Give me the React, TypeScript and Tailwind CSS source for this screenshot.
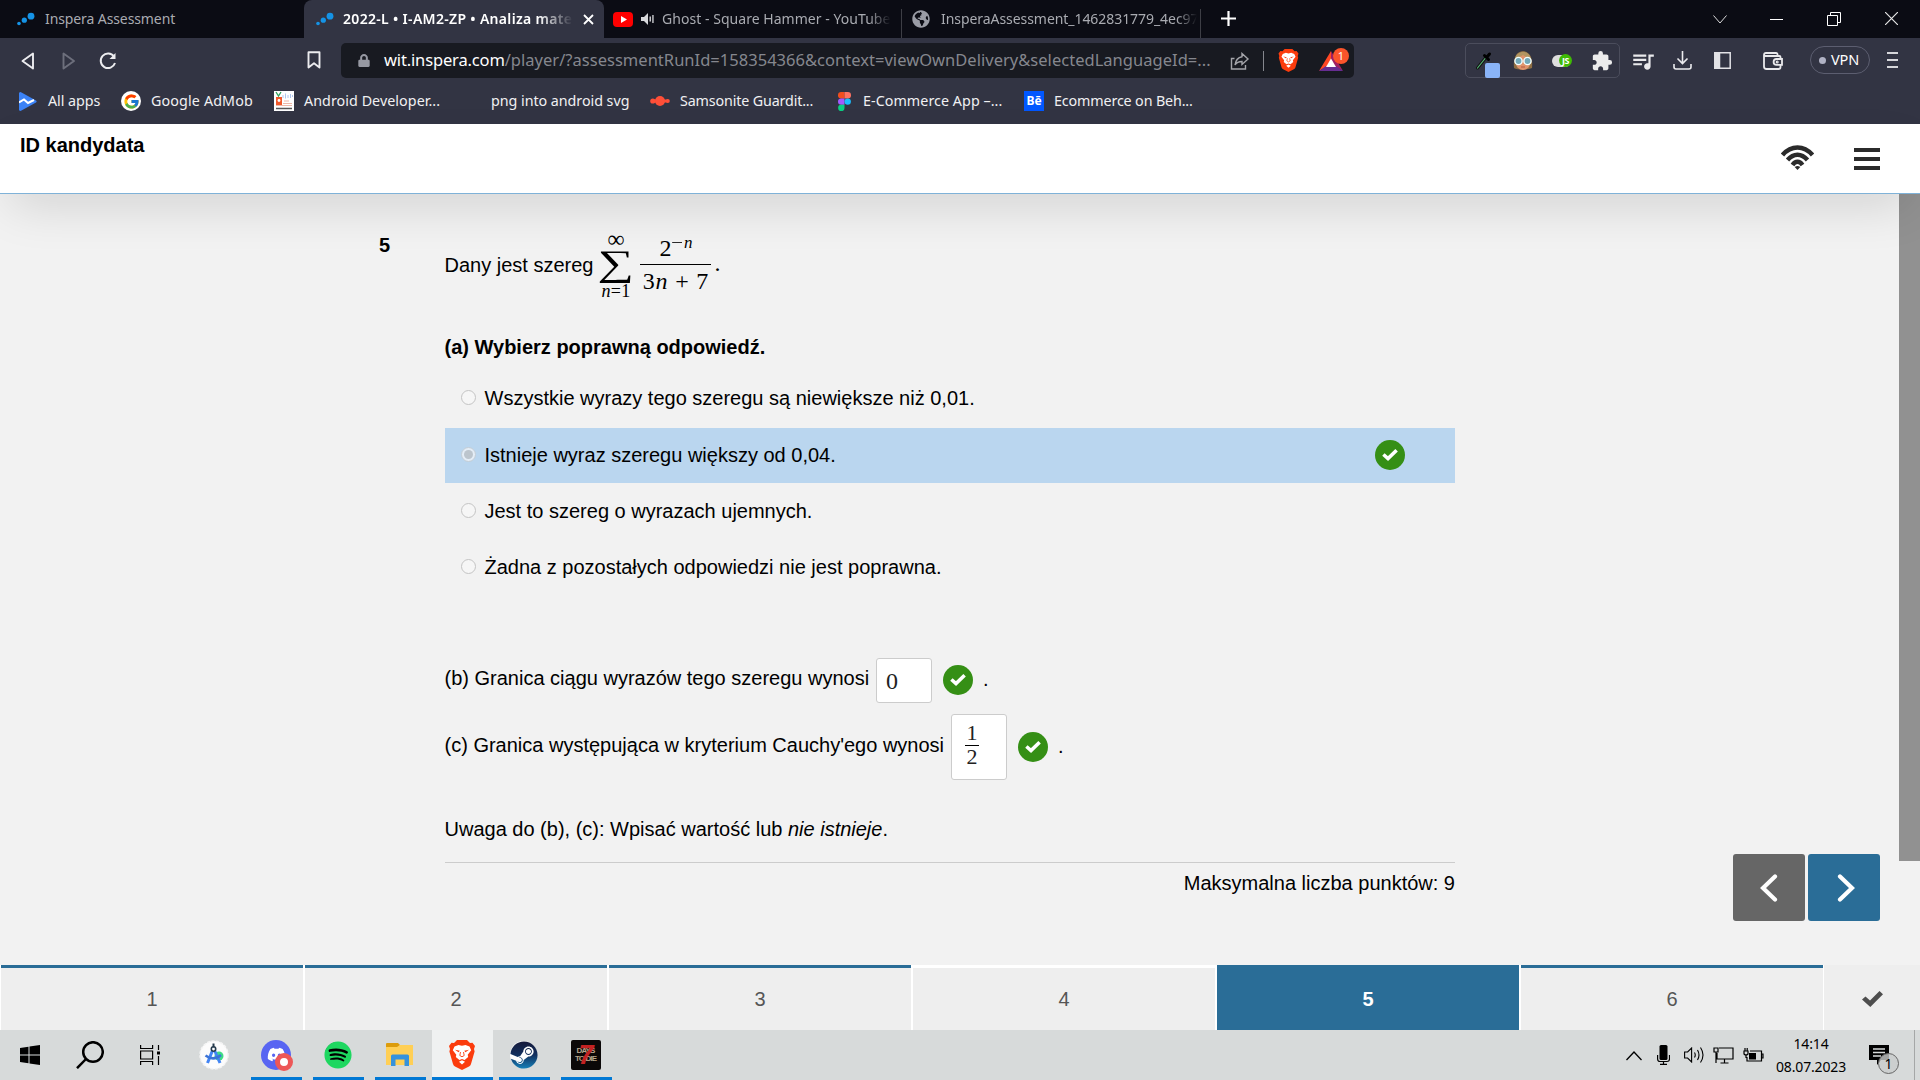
import React from "react";
import { FcGoogle } from "react-icons/fc";
import { FaDiscord, FaSpotify, FaSteam, FaLock, FaGlobeAmericas } from "react-icons/fa";
import { MdExtension, MdQueueMusic } from "react-icons/md";

const InsperaIcon = () => (
  <svg className="h-[14px] w-[18px] shrink-0" viewBox="0 0 18 14" fill="#1593e6">
    <circle cx="2" cy="11.5" r="1.8" />
    <circle cx="7.3" cy="8.2" r="2.6" />
    <circle cx="14" cy="4.2" r="3.4" />
  </svg>
);

const BraveLion = ({ className }: { className: string }) => (
  <svg className={"shrink-0 " + className} viewBox="0 0 26 30">
    <path d="M8 0h10l3 3 2.500-.3L26 6l-1 3 .6 2.500L22 24q-.5 1.500-2 2.500l-7 3.500-7-3.500q-1.500-1-2-2.500L.4 11.500 1 9 0 6l2.500-3.300L5 3z" fill="#fb3c0d" />
    <path d="M9.500 5l3.500 .8L16.500 5l4 1.500 1.700 3.700-3.500 4.600.5 2.200-3.600 3L13 19l-2.600 1L6.800 17l.5-2.200L3.800 10.200 5.500 6.500z" fill="#fff" />
    <path d="M13 20.300l3 1.500-3 2.600-3-2.600z" fill="#fff" />
    <path d="M6 9.800l4.800 1-1.300 1.400zM20 9.800l-4.800 1 1.300 1.400z" fill="#fb3c0d" />
    <path d="M11.500 12l-.7 3.500 2.200 1.300 2.200-1.300-.7-3.500" fill="none" stroke="#fb3c0d" strokeWidth=".9" />
  </svg>
);

const TabStrip = () => (
  <div className="flex h-[38px] w-full items-center bg-[#0b0c14] text-[14px] text-[#a9abb1]">
    <div className="flex h-full w-[304px] items-center pl-[17px]">
      <InsperaIcon />
      <span className="mb-[2px] ml-[10px] whitespace-nowrap tracking-[-0.1px]">Inspera Assessment</span>
    </div>
    <div className="flex h-full w-[300px] items-center rounded-t-[8px] bg-[#323443] pl-[12px] text-white">
      <InsperaIcon />
      <span className="mb-[2px] ml-[9px] w-[230px] overflow-hidden whitespace-nowrap font-semibold tracking-[0.320px] [mask-image:linear-gradient(to_right,black_85%,transparent)]">
        2022-L • I-AM2-ZP • Analiza mate
      </span>
      <svg className="ml-[10px] h-[11px] w-[11px]" viewBox="0 0 11 11" stroke="#fff" strokeWidth="1.8">
        <path d="M1 1l9 9M10 1l-9 9" />
      </svg>
    </div>
    <div className="flex h-full w-[297px] items-center pl-[9px]">
      <div className="flex h-[15px] w-[20px] items-center justify-center rounded-[4px] bg-[#f00]">
        <svg className="h-[7px] w-[7px]" viewBox="0 0 7 7" fill="#fff"><path d="M1 0l6 3.5L1 7z" /></svg>
      </div>
      <svg className="ml-[8px] h-[12px] w-[13px]" viewBox="0 0 13 12" fill="#d9dadd">
        <path d="M0 4h3l4-4v12L3 8H0zM8.5 3.5h1.4v5H8.500zM11.300 2h1.300v8h-1.300z" />
      </svg>
      <span className="mb-[2px] ml-[8px] w-[229px] overflow-hidden whitespace-nowrap tracking-[0.040px] [mask-image:linear-gradient(to_right,black_90%,transparent)]">
        Ghost - Square Hammer - YouTube
      </span>
    </div>
    <div className="mt-[9px] h-[29px] w-px bg-[#3d3e45]" />
    <div className="flex h-full w-[298px] items-center pl-[10px]">
      <FaGlobeAmericas className="h-[18px] w-[18px] shrink-0 text-[#9a9ca5]" />
      <span className="mb-[2px] ml-[11px] w-[256px] overflow-hidden whitespace-nowrap tracking-[-0.060px] [mask-image:linear-gradient(to_right,black_92%,transparent)]">
        InsperaAssessment_1462831779_4ec97
      </span>
    </div>
    <div className="mt-[9px] h-[29px] w-px bg-[#3d3e45]" />
    <svg className="mb-px ml-[20px] h-[15px] w-[15px]" viewBox="0 0 15 15" stroke="#fff" strokeWidth="2.200">
      <path d="M7.500 0v15M0 7.500h15" />
    </svg>
    <svg className="ml-auto h-[9px] w-[14px]" viewBox="0 0 14 9" fill="none" stroke="#dcdcdc">
      <path d="M.5.5L7 8 13.500.5" />
    </svg>
    <div className="ml-[43px] h-px w-[13px] bg-white" />
    <svg className="ml-[44px] h-[14px] w-[14px]" viewBox="0 0 14 14" fill="none" stroke="#fff">
      <path d="M.5 3.500h10v10H.5zM3.500 3V.5h10v10H11" />
    </svg>
    <svg className="mr-[22px] mb-px ml-[44px] h-[13px] w-[13px]" viewBox="0 0 13 13" stroke="#e6e6e6" strokeWidth="1.200">
      <path d="M0 0l13 13M13 0L0 13" />
    </svg>
  </div>
);

const Toolbar = () => (
  <div className="flex h-[45px] w-full items-center bg-[#323443]">
    <svg className="ml-[21px] h-[18px] w-[14px]" viewBox="0 0 14 18" fill="none" stroke="#ececef" strokeWidth="1.900" strokeLinejoin="round">
      <path d="M12 1.500v15L1.500 9z" />
    </svg>
    <svg className="ml-[27px] h-[18px] w-[14px]" viewBox="0 0 14 18" fill="none" stroke="#6d6f7c" strokeWidth="1.900" strokeLinejoin="round">
      <path d="M1.500 1.500v15L12 9z" />
    </svg>
    <svg className="ml-[23px] h-[18px] w-[18px]" viewBox="0 0 18 18" fill="none" stroke="#ececef" strokeWidth="2">
      <path d="M15 4.500A7.300 7.300 0 1 0 16 11" />
      <path d="M16.500 1v6h-6z" fill="#ececef" stroke="none" />
    </svg>
    <svg className="mb-px ml-[190px] h-[18px] w-[14px]" viewBox="0 0 14 18" fill="none" stroke="#ececef" strokeWidth="1.900" strokeLinejoin="round">
      <path d="M1.500 1.200h11V16.500L7 12.300 1.500 16.500z" />
    </svg>
    <div className="ml-[20px] flex h-[35px] w-[1013px] items-center rounded-[5px] bg-[#181a21] pl-[17px]">
      <FaLock className="h-[13px] w-[12px] text-[#9799a3]" />
      <span className="ml-[14px] w-[828px] text-[16.500px] tracking-[0.025px] whitespace-nowrap text-[#85878e]">
        <span className="tracking-[-0.150px] text-white">wit.inspera.com</span>/player/?assessmentRunId=158354366&amp;context=viewOwnDelivery&amp;selectedLanguageId=...
      </span>
      <svg className="ml-[18px] h-[18px] w-[20px]" viewBox="0 0 20 18" fill="none" stroke="#a4a5aa" strokeWidth="1.400">
        <path d="M4.500 6.500H1.500v10.500h14v-4M12 1.500l6 5.500-6 5.500V9.500c-3.500 0-5.500 1-7 3.500.5-4 2.500-7.500 7-8.300z" />
      </svg>
      <div className="ml-[13px] h-[20px] w-px bg-[#85878e]" />
      <BraveLion className="ml-[14px] h-[23px] w-[21px]" />
      <div className="relative ml-[20px] h-[20px] w-[24px]">
        <svg className="h-[20px] w-[24px]" viewBox="0 0 24 20">
          <path d="M12 0L0 20l12-7z" fill="#ff4724" />
          <path d="M12 0l12 20-12-7z" fill="#9e1f63" />
          <path d="M0 20h24l-7-5H7z" fill="#662d91" />
          <path d="M12 7.500l5 8.500H7z" fill="#fff" />
        </svg>
        <span className="absolute -top-[3px] left-[14px] flex h-[16px] w-[16px] items-center justify-center rounded-full bg-[#fb542b] text-[11px] leading-none text-white">1</span>
      </div>
    </div>
    <div className="ml-[111px] flex h-[35px] w-[155px] items-center rounded-[5px] border border-[#4b4d5c]">
      <div className="relative ml-[9px] h-[33px] w-[26px]">
        <svg className="absolute top-[7px] left-0 h-[19px] w-[18px]" viewBox="0 0 18 19" fill="none" strokeLinecap="round">
          <path d="M2.500 17L10.500 7" stroke="#111" strokeWidth="3" />
          <path d="M2.500 17L10.500 7" stroke="#58b878" strokeWidth="1.200" />
          <path d="M9.500 4.500l4 4M12 6l2.500-3" stroke="#000" strokeWidth="3" />
        </svg>
        <div className="absolute top-[19px] left-[10px] h-[15px] w-[15px] rounded-[2px] bg-[#8ab4f8]" />
      </div>
      <svg className="ml-[12px] h-[19px] w-[20px]" viewBox="0 0 20 19">
        <path d="M1 17C0 7 3 1 10 0c7 1 10 7 9 17-3 2-15 2-18 0z" fill="#8d6e43" />
        <ellipse cx="10" cy="11" rx="7.500" ry="8" fill="#e0946c" />
        <path d="M2 8C3 3 6 1 10 1s7 2 8 7c-3-1-5-2-8-4-3 2-5 3-8 4z" fill="#b39561" />
        <circle cx="5.500" cy="10" r="3.600" fill="#73a9b9" stroke="#f2ffff" strokeWidth="1.400" />
        <circle cx="14.500" cy="10" r="3.600" fill="#73a9b9" stroke="#f2ffff" strokeWidth="1.400" />
        <path d="M8 16h4" stroke="#b8583f" />
      </svg>
      <div className="relative ml-[19px] flex h-[12px] w-[19px] items-center rounded-full bg-[#dedede]">
        <span className="absolute -right-[1px] flex h-[13px] w-[13px] items-center justify-center rounded-full bg-[#3fbb05] text-[9px] font-bold tracking-[-0.5px] text-white">JS</span>
      </div>
      <MdExtension className="ml-[20px] h-[22px] w-[22px] text-[#ececec]" />
    </div>
    <MdQueueMusic className="ml-[10px] h-[26px] w-[26px] text-[#e9e9ec]" />
    <svg className="ml-[17px] h-[19px] w-[19px]" viewBox="0 0 19 19" fill="none" stroke="#ececef" strokeWidth="1.600">
      <path d="M9.500 0v12.500M4.500 7.500l5 5 5-5M1 13v3q0 2 2 2h13q2 0 2-2v-3" />
    </svg>
    <svg className="ml-[22px] h-[17px] w-[17px]" viewBox="0 0 17 17" fill="none" stroke="#e2e2e6" strokeWidth="1.500">
      <path d="M.8.8h15.400v15.400H.8z" />
      <path d="M1 1h4.500v15H1z" fill="#e2e2e6" />
    </svg>
    <svg className="ml-[32px] h-[18px] w-[20px]" viewBox="0 0 20 18" fill="none" stroke="#e9e9ec" strokeWidth="1.800">
      <path d="M17.500 6V5q0-1-1.200-1H1M14.500 4V2.500Q14.500 1 13 1H3Q1 1 1 3v11.500Q1 17 3.500 17h12q2 0 2-2v-2M19 7h-5.500a2.900 2.900 0 0 0 0 5.800H19z" />
      <circle cx="14.200" cy="9.900" r=".6" />
    </svg>
    <div className="mb-px ml-[27px] flex h-[28px] w-[60px] items-center rounded-full border border-[#5c5e70] text-[14.500px] tracking-[-0.1px] text-white">
      <span className="ml-[8px] h-[7px] w-[7px] rounded-full bg-[#b0b2c4]" />
      <span className="mb-px ml-[5px]">VPN</span>
    </div>
    <div className="mb-px ml-[17px] flex w-[11px] flex-col gap-[5px]">
      <span className="h-[2px] bg-[#d6d6da]" />
      <span className="h-[2px] bg-[#d6d6da]" />
      <span className="h-[2px] bg-[#d6d6da]" />
    </div>
  </div>
);

const Bookmarks = () => (
  <div className="flex h-[41px] w-full items-center bg-[#323443] pb-[5px] text-[14.300px] whitespace-nowrap text-[#f0f0f2]">
    <svg className="ml-[19px] h-[19px] w-[18px]" viewBox="0 0 18 19">
      <path d="M0 1Q1-.5 2.500.5L17 8.500q1.300 1 0 2L2.500 18.500Q1 19.500 0 18z" fill="#3b82f6" />
      <path d="M0 10.500l5-3 4 3.500 6-3" stroke="#fff" strokeWidth="2" fill="none" />
    </svg>
    <span className="mb-px ml-[11px] w-[73px] tracking-[-0.050px]">All apps</span>
    <div className="flex h-[20px] w-[20px] items-center justify-center rounded-full bg-white"><FcGoogle className="h-[17px] w-[17px]" /></div>
    <span className="mb-px ml-[10px] w-[123px] tracking-[0.130px]">Google AdMob</span>
    <svg className="h-[20px] w-[20px]" viewBox="0 0 20 20">
      <path d="M0 0h20v20H0z" fill="#fff" />
      <path d="M2 6h6v8H2z" fill="#f0592b" /><circle cx="5" cy="9.500" r="1.400" fill="#fff" />
      <path d="M2 1l2.500 4L7 1" stroke="#2fa35d" fill="none" strokeWidth="1.300" />
      <path d="M9 4v3M11.500 2.500v5M14 4v3M16.500 3v4M18.500 4v2" stroke="#9ab7e8" strokeWidth=".8" />
      <path d="M10 10h5M9 12.500h9M2 14.500h16" stroke="#e79a82" strokeWidth=".7" /><path d="M2 17.500h16" stroke="#555" strokeWidth="1.500" />
    </svg>
    <span className="mb-px ml-[10px] w-[187px] tracking-[0.050px]">Android Developer...</span>
    <span className="mb-px w-[159px] tracking-[-0.040px]">png into android svg</span>
    <svg className="h-[12px] w-[20px]" viewBox="0 0 20 12" fill="#ff4f38">
      <path d="M2 4.500h16v3H2z" /><circle cx="10" cy="6" r="5" /><circle cx="2.800" cy="6" r="2.600" /><circle cx="17.800" cy="6" r="2" />
    </svg>
    <span className="mb-px ml-[10px] w-[158px] tracking-[-0.150px]">Samsonite Guardit...</span>
    <svg className="h-[19px] w-[13px]" viewBox="0 0 13 19">
      <path d="M6.500 0H3.200a3.200 3.200 0 0 0 0 6.400h3.300z" fill="#f24e1e" />
      <path d="M6.500 0h3.300a3.200 3.200 0 0 1 0 6.400H6.500z" fill="#ff7262" />
      <path d="M6.500 6.400H3.200a3.200 3.200 0 0 0 0 6.400h3.300z" fill="#a259ff" />
      <circle cx="9.700" cy="9.600" r="3.200" fill="#1abcfe" />
      <path d="M6.500 12.800H3.200A3.200 3.200 0 1 0 6.500 16z" fill="#0acf83" />
    </svg>
    <span className="mb-px ml-[12px] w-[161px] tracking-[0.050px]">E-Commerce App –...</span>
    <span className="flex h-[20px] w-[20px] items-center justify-center bg-[#0057ff] text-[12px] font-bold text-white">Bē</span>
    <span className="mb-px ml-[10px] tracking-[-0.140px]">Ecommerce on Beh...</span>
  </div>
);

const PageHeader = () => (
  <header className="relative z-10 flex h-[70px] w-full items-start border-b border-[#7fb2d8] bg-white pl-[20px] shadow-[0_20px_50px_-10px_rgba(0,0,0,0.140)]">
    <h1 className="mt-[9px] text-[20px] leading-[24px] font-bold text-black">ID kandydata</h1>
    <svg className="mt-[21px] ml-auto h-[25px] w-[33px]" viewBox="0 0 33 25" fill="none" stroke="#2b2b2b" strokeWidth="4.400">
      <path d="M1.500 10Q8 2.500 16.500 2.500t15 7.500M6.500 15Q11 9.700 16.500 9.700t10 5.300M11.500 20q2.200-3.200 5-3.200t5 3.200" />
      <path d="M13.700 22q2.800-2 5.600 0l-2.800 3z" fill="#2b2b2b" stroke="none" />
    </svg>
    <div className="mt-[24px] mr-[40px] ml-[40px] flex w-[26px] flex-col gap-[5px]">
      <span className="h-[4px] bg-[#2b2b2b]" />
      <span className="h-[4px] bg-[#2b2b2b]" />
      <span className="h-[4px] bg-[#2b2b2b]" />
    </div>
  </header>
);

const Correct = ({ className }: { className: string }) => (
  <span className={"flex h-[30px] w-[30px] shrink-0 items-center justify-center rounded-full bg-[#358f15] " + className}>
    <svg className="h-[12px] w-[16px]" viewBox="0 0 16 12" fill="none" stroke="#fff" strokeWidth="3.600">
      <path d="M1.400 5.500l4.600 4L14.600 1.300" />
    </svg>
  </span>
);

const options = [
  { text: "Wszystkie wyrazy tego szeregu są niewiększe niż 0,01.", chosen: false },
  { text: "Istnieje wyraz szeregu większy od 0,04.", chosen: true },
  { text: "Jest to szereg o wyrazach ujemnych.", chosen: false },
  { text: "Żadna z pozostałych odpowiedzi nie jest poprawna.", chosen: false },
];

const Series = () => (
  <span className="flex h-[70px] items-center font-['Liberation_Serif',serif]">
    <span className="ml-[7px] flex h-[70px] w-[31px] flex-col items-center">
      <span className="h-[17px] text-[24px] leading-[18px]">∞</span>
      <span className="h-[36px] origin-center scale-x-[1.420] text-[36px] leading-[33px]">∑</span>
      <span className="text-[18px] leading-[17px] tracking-[0.300px] whitespace-nowrap"><i>n</i>=1</span>
    </span>
    <span className="ml-[9px] flex w-[71px] flex-col items-center text-[24px]">
      <span className="flex h-[34px] items-center pt-[2px] leading-[30px]">
        2<span className="-mt-[11px] flex text-[17px]"><span className="origin-left scale-x-[1.250] pr-[3px]">−</span><i>n</i></span>
      </span>
      <span className="h-px w-full bg-black" />
      <span className="h-[35px] leading-[32px] tracking-[0.800px] whitespace-nowrap">3<i>n</i> + 7</span>
    </span>
    <span className="mb-[4px] ml-[3px] text-[24px]">.</span>
  </span>
);

const Question = () => (
  <div className="flex w-[1455px] text-[20px] leading-[24px] text-black">
    <div className="mt-[39px] ml-[379px] w-[65.500px] font-bold">5</div>
    <div className="flex w-[1010.500px] flex-col">
      <div className="mt-[36px] flex h-[70px] items-center whitespace-nowrap">
        <span>Dany jest szereg</span>
        <Series />
      </div>
      <p className="mt-[35px] h-[24px] font-bold">(a) Wybierz poprawną odpowiedź.</p>
      <div className="mt-[12px] flex flex-col gap-px">
        {options.map((o) => (
          <div key={o.text} className={o.chosen ? "mt-px flex h-[55px] items-center bg-[#bad6ef] pb-[2px]" : "flex h-[55px] items-center pb-[2px]"}>
            <span className={o.chosen ? "ml-[16px] flex h-[15px] w-[15px] items-center justify-center rounded-full border border-[#c3cdd6] bg-[#e4edf6]" : "ml-[16px] flex h-[15px] w-[15px] rounded-full border border-[#c4c4c4] bg-[#f6f6f6]"}>
              {o.chosen && <span className="h-[9px] w-[9px] rounded-full bg-[#bcc5cd]" />}
            </span>
            <span className="ml-[9px]">{o.text}</span>
            {o.chosen && <Correct className="mr-[50px] ml-auto" />}
          </div>
        ))}
      </div>
      <div className="mt-[63px] flex h-[45px] items-center whitespace-nowrap">
        <span className="mb-[5px] w-[431.500px]">(b) Granica ciągu wyrazów tego szeregu wynosi</span>
        <span className="flex h-[45px] w-[56px] items-center rounded-[3px] border border-[#ccc] bg-white pl-[9px] font-['Liberation_Serif',serif] text-[24px] text-[#222]">0</span>
        <Correct className="mb-px ml-[11px]" />
        <span className="mb-[3px] ml-[10px]">.</span>
      </div>
      <div className="mt-[11px] flex h-[66px] items-center whitespace-nowrap">
        <span className="mb-[4px] w-[506.500px]">(c) Granica występująca w kryterium Cauchy'ego wynosi</span>
        <span className="flex h-[66px] w-[56px] flex-col rounded-[3px] border border-[#ccc] bg-white pt-[7px] pl-[13px] font-['Liberation_Serif',serif] text-[22px] leading-[23px] text-[#222]">
          <span className="flex w-[14px] flex-col items-center">
            <span className="h-[23px] leading-[22px]">1</span>
            <span className="h-px w-full bg-black" />
            <span className="leading-[22px]">2</span>
          </span>
        </span>
        <Correct className="ml-[11px]" />
        <span className="mb-[3px] ml-[10px]">.</span>
      </div>
      <p className="mt-[37px] h-[24px]">Uwaga do (b), (c): Wpisać wartość lub <i>nie istnieje</i>.</p>
      <div className="mt-[21px] h-px w-full bg-[#ccc]" />
      <p className="mt-[8px] h-[24px] text-right">Maksymalna liczba punktów: 9</p>
    </div>
  </div>
);

const Arrow = ({ flip }: { flip?: boolean }) => (
  <svg className={flip ? "ml-[3px] h-[28px] w-[18px] -scale-x-100" : "h-[28px] w-[18px]"} viewBox="0 0 18 28" fill="none" stroke="#fff" strokeWidth="4.200" strokeLinecap="round">
    <path d="M15 2.500L3 14l12 11.500" />
  </svg>
);

const tab = "flex h-[65px] w-[302px] shrink-0 items-center justify-center border-t-[3px] pb-px text-[20px] ";
const Pager = () => (
  <nav className="flex h-[65px] w-full gap-[2px] bg-white pl-px text-[#555]">
    <div className={tab + "border-[#2a6d97] bg-[#eee]"}>1</div>
    <div className={tab + "border-[#2a6d97] bg-[#eee]"}>2</div>
    <div className={tab + "border-[#2a6d97] bg-[#eee]"}>3</div>
    <div className={tab + "border-white bg-[#eee]"}>4</div>
    <div className={tab + "border-[#2a6d97] bg-[#2a6d97] font-bold text-white"}>5</div>
    <div className={tab + "border-[#2a6d97] bg-[#eee]"}>6</div>
    <div className="-ml-px flex flex-1 items-center justify-center bg-[#eee] pt-[3px]">
      <svg className="h-[16px] w-[21px]" viewBox="0 0 21 16" fill="#4d4d4d">
        <path d="M0 8.500L3.500 5.500 8 9.500 17.500 0 21 3.200 8.300 16z" />
      </svg>
    </div>
  </nav>
);

const app = "flex h-[50px] shrink-0 items-center justify-center border-b-[3px] ";
const Taskbar = () => (
  <div className="flex h-[50px] w-full items-center bg-[#d7dada] text-black">
    <svg className="ml-[20px] h-[20px] w-[20px]" viewBox="0 0 20 20">
      <path d="M0 3l8.500-1.200v7.700H0zM9.500 1.600L20 0v9.500H9.500zM0 10.500h8.500v7.700L0 17zM9.500 10.500H20V20L9.500 18.400z" />
    </svg>
    <svg className="ml-[36px] h-[28px] w-[28px]" viewBox="0 0 28 28" fill="none" stroke="#000" strokeWidth="2.500">
      <circle cx="17" cy="11" r="9.800" /><path d="M10 18l-9 9.200" />
    </svg>
    <svg className="ml-[36px] h-[20px] w-[20px]" viewBox="0 0 20 20" fill="none" stroke="#000" strokeWidth="1.200">
      <path d="M.6 0v3.500h12V0M.6 20v-3.500h12V20M.6 6h12v8H.6zM18.500 0v5M18.500 11v9" /><path d="M17 6.500h3v3h-3z" fill="#000" stroke="none" />
    </svg>
    <svg className="ml-[39px] h-[30px] w-[30px]" viewBox="0 0 30 30" fill="none">
      <circle cx="15" cy="15" r="14" fill="#fcfcfc" stroke="#f4f4f4" strokeWidth="1.500" strokeDasharray="3 1.500" />
      <circle cx="20" cy="16" r="4.500" fill="#3ddc84" />
      <path d="M14.500 8L8.500 23M14.500 8l6.500 15" stroke="#4285f4" strokeWidth="3" />
      <path d="M6.500 15.500q8 6 15.500-.5" stroke="#3b74d8" strokeWidth="2.500" />
      <circle cx="14.500" cy="9" r="2.200" fill="#fff" stroke="#263b4d" strokeWidth="1.600" /><path d="M14.500 3.500v4" stroke="#263b4d" strokeWidth="2" />
    </svg>
    <div className={app + "ml-[22px] w-[51px] border-[#0078d4]"}>
      <div className="relative -ml-[1px] mt-[3px] flex h-[30px] w-[30px] items-center justify-center rounded-full bg-[#5865f2]">
        <FaDiscord className="mb-[2px] h-[19px] w-[19px] text-white" />
        <span className="absolute top-[13px] left-[14px] h-[18px] w-[18px] rounded-full border-[5px] border-[#ed5757] bg-white" />
      </div>
    </div>
    <div className={app + "ml-[11px] w-[51px] border-[#0078d4]"}>
      <div className="mt-[2px] -ml-[2px] flex h-[25px] w-[25px] items-center justify-center rounded-full bg-black"><FaSpotify className="h-[28px] w-[28px] shrink-0 text-[#1ed760]" /></div>
    </div>
    <div className={app + "ml-[11px] w-[51px] border-[#0078d4]"}>
      <svg className="-ml-[2px] h-[24px] w-[28px]" viewBox="0 0 28 24">
        <path d="M0 2Q0 1 1 1h11l2 2-2 3H0z" fill="#dc9c0c" /><path d="M0 5h11l3-2h13v20H0z" fill="#ffcf55" />
        <path d="M5 24V14q0-1.500 1.500-1.500h15Q23 12.500 23 14v10h-4.500v-6.500h-9V24z" fill="#3692dc" />
      </svg>
    </div>
    <div className={app + "ml-[6px] w-[61px] border-[#0078d4] bg-[#eff1f1]"}>
      <BraveLion className="mt-[2px] -ml-[2px] h-[30px] w-[26px]" />
    </div>
    <div className={app + "ml-[6px] w-[51px] border-[#0078d4]"}>
      <div className="mt-[2px] -ml-[2px] flex h-[27px] w-[27px] items-center justify-center rounded-full bg-white">
        <svg className="h-[28px] w-[28px] shrink-0">
          <defs>
            <linearGradient id="steam" x1="0" y1="0" x2="0" y2="1">
              <stop offset="0" stopColor="#161a3a" /><stop offset="0.5" stopColor="#12305f" /><stop offset="1" stopColor="#1580b8" />
            </linearGradient>
          </defs>
          <FaSteam size={28} fill="url(#steam)" />
        </svg>
      </div>
    </div>
    <div className={app + "ml-[11px] w-[51px] border-[#0078d4]"}>
      <div className="relative mt-[3px] -ml-[2px] flex h-[30px] w-[30px] flex-col items-center justify-center rounded-[2px] bg-[#0b0808] font-['Liberation_Sans',sans-serif] text-[8px] leading-[8px] font-bold tracking-[-0.9px] text-[#b8a78c]">
        <span>DAYS</span><span>TO DIE</span>
        <span className="absolute top-[2px] left-[8px] text-[27px] leading-[26px] font-bold text-[#c32222] italic">7</span>
      </div>
    </div>
    <svg className="mt-px ml-auto h-[10px] w-[16px]" viewBox="0 0 16 10" fill="none" stroke="#000" strokeWidth="1.300"><path d="M.5 9L8 1l7.500 8" /></svg>
    <svg className="ml-[15px] h-[20px] w-[13px]" viewBox="0 0 13 20" fill="none" stroke="#000" strokeWidth="1.200">
      <path d="M2.500 1.500Q2.500 0 4 0h5q1.500 0 1.500 1.500v12Q10.500 15 9 15H4q-1.500 0-1.500-1.500z" fill="#000" stroke="none" />
      <path d="M.6 10v4q0 2.500 2.500 2.500h7q2.400 0 2.400-2.500v-4M6.500 16v3.400M3 19.400h7" />
    </svg>
    <svg className="ml-[14px] h-[16px] w-[20px]" viewBox="0 0 20 16" fill="none" stroke="#000" strokeWidth="1.100">
      <path d="M.6 5h3l4-4v14l-4-4h-3zM10.500 5.500q1.500 2.500 0 5M13.500 3q3 5 0 10M16.500.5q5 7.500 0 15" />
    </svg>
    <svg className="ml-[9px] h-[17px] w-[21px]" viewBox="0 0 21 17" fill="none" stroke="#000" strokeWidth="1.200">
      <path d="M6 1h14v11H4V6M1 1h4v4H1zM3 5v11M11.500 12v3.500M7.500 16h8" />
    </svg>
    <svg className="ml-[9px] h-[14px] w-[21px]" viewBox="0 0 21 14" fill="none" stroke="#000" strokeWidth="1.200">
      <path d="M7 3h11.500v10H4V9M18.500 6h1.500v4h-1.500M1 3h4v3q-2 2-4 0zM2 0v3M4.200 0v3M3 7v3" /><path d="M6 5h7v6.500H6z" fill="#000" stroke="none" />
    </svg>
    <div className="mb-px ml-[7px] flex w-[80px] flex-col items-center text-[14px] leading-[23px] tracking-[-0.150px] whitespace-nowrap">
      <span>14:14</span>
      <span>08.07.2023</span>
    </div>
    <div className="relative ml-[18px] h-[32px] w-[31px]">
      <svg className="absolute top-[6px] left-0 h-[22px] w-[20px]" viewBox="0 0 20 22">
        <path d="M0 0h20v15h-8l-4 5v-5H0z" /><path d="M4 4h12M4 7.500h12M4 11h8" stroke="#d7dada" strokeWidth="1.300" />
      </svg>
      <span className="absolute top-[14px] left-[9px] flex h-[21px] w-[21px] items-center justify-center rounded-full border border-[#666] bg-[#c9cccc]/80 text-[14px]">1</span>
    </div>
    <div className="ml-[14px] h-[50px] w-px bg-[#a5a7a7]" />
    <div className="w-[5px]" />
  </div>
);

export default function App() {
  return (
    <div className="flex h-[1080px] w-[1920px] flex-col overflow-hidden bg-[#f2f2f2] font-['Liberation_Sans',Arial,sans-serif]">
      <div className="flex flex-col font-['Noto_Sans',sans-serif]">
        <TabStrip />
        <Toolbar />
        <Bookmarks />
      </div>
      <PageHeader />
      <main className="relative flex h-[771px] w-full justify-between">
        <Question />
        <div className="h-[667px] w-[21px] bg-[#919191]" />
        <div className="absolute top-[660px] right-[40px] flex gap-[3px]">
          <button className="flex h-[67px] w-[72px] items-center justify-center rounded-[3px] bg-[#666]"><Arrow /></button>
          <button className="flex h-[67px] w-[72px] items-center justify-center rounded-[3px] bg-[#2a6d97]"><Arrow flip /></button>
        </div>
      </main>
      <Pager />
      <div className="font-['Noto_Sans',sans-serif]"><Taskbar /></div>
    </div>
  );
}
